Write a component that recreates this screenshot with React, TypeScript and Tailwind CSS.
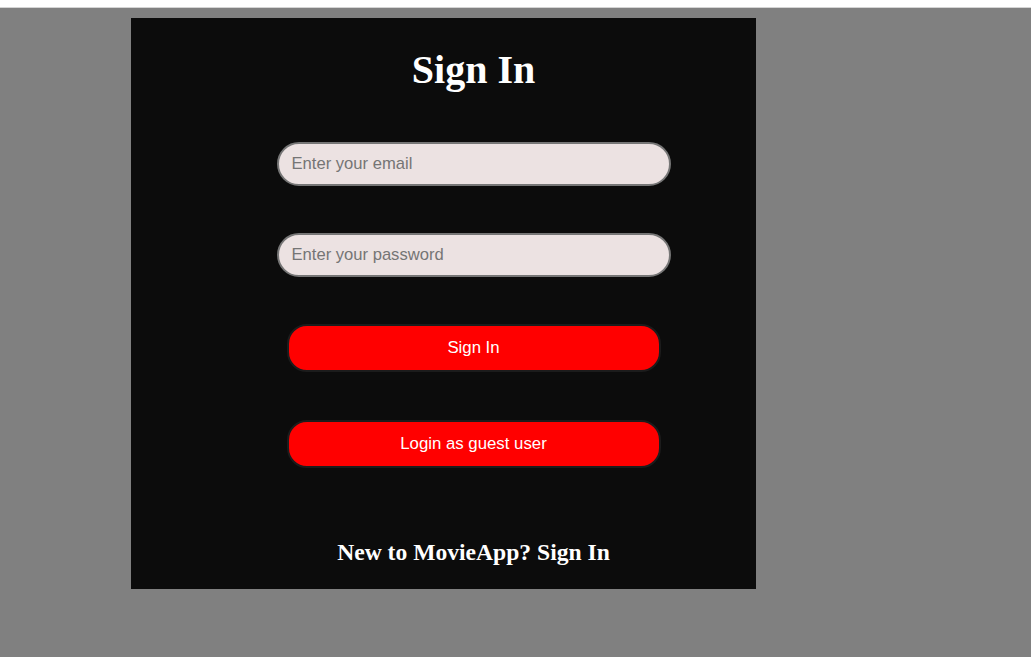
import React from 'react';

const App = () => {
  return (
    <div className="min-h-screen bg-[#808080]" style={{ height: 657 }}>
      {/* top strip */}
      <div className="h-[7px] bg-white" />
      <div className="h-px bg-[#d4d4d4]" />

      {/* Sign in panel */}
      <div className="ml-[131px] mt-[10px] w-[625px] h-[571px] bg-[#0c0c0c] pl-[60px] pt-[28px] flex flex-col items-center">
        <h1 className="text-[40px] leading-[48px] font-bold text-white font-['Liberation_Serif',serif]">
          Sign In
        </h1>

        <form className="flex flex-col items-center mt-[48px] font-['Liberation_Sans',Arial,sans-serif]">
          <input
            type="email"
            placeholder="Enter your email"
            className="w-[394px] h-[44px] rounded-full border-2 border-[#767676] bg-[#ece2e2] px-[13px] text-[16.6px] text-black placeholder:text-[#757575] outline-none"
          />
          <input
            type="password"
            placeholder="Enter your password"
            className="mt-[47px] w-[394px] h-[44px] rounded-full border-2 border-[#767676] bg-[#ece2e2] px-[13px] text-[16.6px] text-black placeholder:text-[#757575] outline-none"
          />
          <button
            type="button"
            className="mt-[47px] w-[374px] h-[48px] rounded-[20px] border-2 border-[#1c1c1c] bg-[#ff0000] text-[16.8px] text-white"
          >
            Sign In
          </button>
          <button
            type="button"
            className="mt-[48px] w-[374px] h-[48px] rounded-[20px] border-2 border-[#1c1c1c] bg-[#ff0000] text-[16.8px] text-white"
          >
            Login as guest user
          </button>
        </form>

        <p className="mt-[70px] text-[23.6px] leading-[28px] font-bold text-white font-['Liberation_Serif',serif]">
          New to MovieApp? Sign In
        </p>
      </div>
    </div>
  );
};

export default App;
